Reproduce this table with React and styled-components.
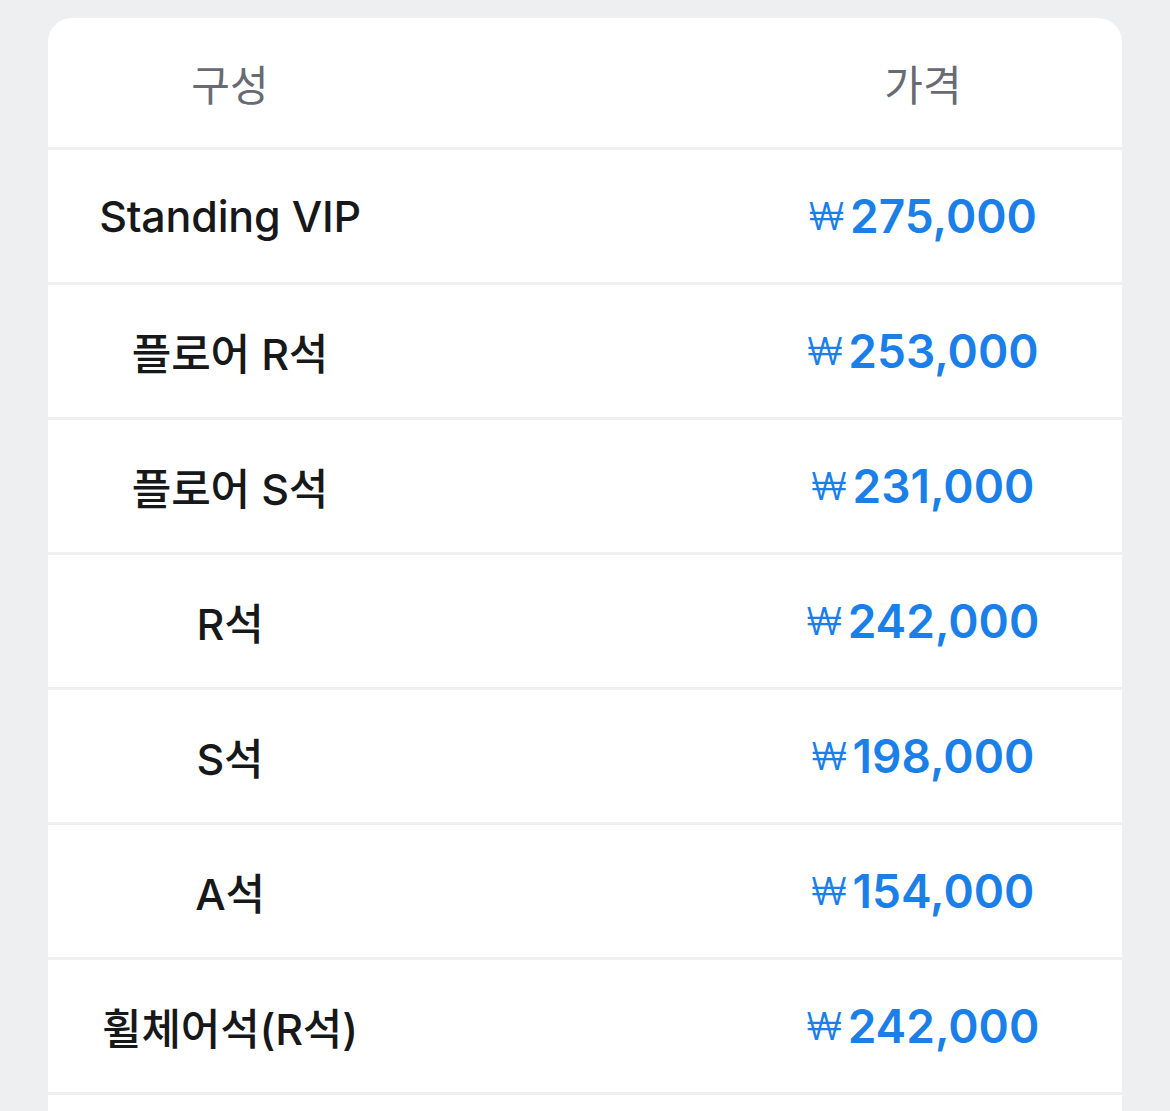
import React from "react";
import styled, { createGlobalStyle } from "styled-components";

const Global = createGlobalStyle`
  html, body { margin: 0; padding: 0; background: #eeeff1; }
  body { font-family: "Inter", "Noto Sans CJK KR", sans-serif; -webkit-font-smoothing: antialiased; }
`;

const Page = styled.div`
  padding: 18px 48px 0 48px;
  min-height: 1111px;
  box-sizing: border-box;
`;

const Card = styled.div`
  background: #ffffff;
  border-radius: 24px 24px 0 0;
  overflow: hidden;
  padding-bottom: 60px;
`;

const Row = styled.div`
  display: grid;
  grid-template-columns: 364px 1fr;
  align-items: center;
  height: ${(p) => (p.$header ? "129px" : "132px")};
  border-bottom: 3px solid #efeff0;
`;

const NameCell = styled.div`
  text-align: center;
  font-family: "Inter", "Noto Sans CJK KR", sans-serif;
  font-size: ${(p) => (p.$header ? "42px" : "43px")};
  font-weight: ${(p) => (p.$header ? 400 : 500)};
  color: ${(p) => (p.$header ? "#686b73" : "#17181a")};
  letter-spacing: ${(p) => (p.$header ? "0" : "-0.2px")};
  white-space: nowrap;
`;

const PriceCell = styled.div`
  padding-left: 312px;
  text-align: center;
  font-family: "Inter", "Noto Sans CJK KR", sans-serif;
  font-size: ${(p) => (p.$header ? "42px" : "46px")};
  font-weight: ${(p) => (p.$header ? 400 : 600)};
  color: ${(p) => (p.$header ? "#686b73" : "#1a7fe8")};
  white-space: nowrap;
`;

const Won = styled.span`
  font-size: 38px;
  font-weight: 300;
  margin-right: 6px;
  position: relative;
  top: -3px;
`;

const rows = [
  ["Standing VIP", "275,000"],
  ["플로어 R석", "253,000"],
  ["플로어 S석", "231,000"],
  ["R석", "242,000"],
  ["S석", "198,000"],
  ["A석", "154,000"],
  ["휠체어석(R석)", "242,000"],
];

export default function App() {
  return (
    <>
      <Global />
      <Page>
        <Card>
          <Row $header>
            <NameCell $header>구성</NameCell>
            <PriceCell $header>가격</PriceCell>
          </Row>
          {rows.map(([name, price]) => (
            <Row key={name}>
              <NameCell>{name}</NameCell>
              <PriceCell>
                <Won>₩</Won>
                {price}
              </PriceCell>
            </Row>
          ))}
        </Card>
      </Page>
    </>
  );
}
